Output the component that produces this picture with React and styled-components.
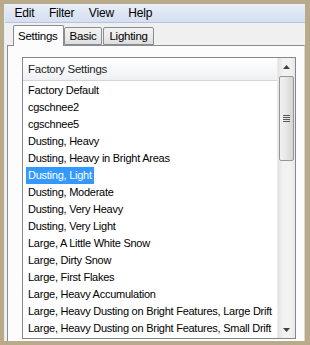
import React from "react";
import styled, { createGlobalStyle } from "styled-components";

const GlobalStyle = createGlobalStyle`
  html, body {
    margin: 0;
    padding: 0;
    background: #b9aa89;
  }
  body {
    font-family: "Liberation Sans", Arial, sans-serif;
    font-size: 11px;
  }
`;

const presets = [
  "Factory Default",
  "cgschnee2",
  "cgschnee5",
  "Dusting, Heavy",
  "Dusting, Heavy in Bright Areas",
  "Dusting, Light",
  "Dusting, Moderate",
  "Dusting, Very Heavy",
  "Dusting, Very Light",
  "Large, A Little White Snow",
  "Large, Dirty Snow",
  "Large, First Flakes",
  "Large, Heavy Accumulation",
  "Large, Heavy Dusting on Bright Features, Large Drift",
  "Large, Heavy Dusting on Bright Features, Small Drift",
];

function App() {
  const selected = "Dusting, Light";
  return (
    <>
      <GlobalStyle />
      <Frame>
        <Window>
          <MenuBar>
            <MenuItem>Edit</MenuItem>
            <MenuItem>Filter</MenuItem>
            <MenuItem>View</MenuItem>
            <MenuItem>Help</MenuItem>
          </MenuBar>
          <TabStrip>
            <Tab $active>Settings</Tab>
            <Tab>Basic</Tab>
            <Tab>Lighting</Tab>
          </TabStrip>
          <TabPage>
            <ListBox>
              <ListArea>
                <ListHeader>Factory Settings</ListHeader>
                {presets.map((p) => (
                  <Row key={p}>
                    <RowText $selected={p === selected}>{p}</RowText>
                  </Row>
                ))}
              </ListArea>
              <ScrollBar>
                <ArrowButton>
                  <svg width="7" height="4" viewBox="0 0 7 4">
                    <path d="M0 4 L3.5 0 L7 4 Z" fill="#404040" />
                  </svg>
                </ArrowButton>
                <Track>
                  <Thumb>
                    <Grip>
                      <span />
                      <span />
                      <span />
                      <span />
                    </Grip>
                  </Thumb>
                </Track>
                <ArrowButton>
                  <svg width="7" height="4" viewBox="0 0 7 4">
                    <path d="M0 0 L7 0 L3.5 4 Z" fill="#404040" />
                  </svg>
                </ArrowButton>
              </ScrollBar>
            </ListBox>
          </TabPage>
        </Window>
      </Frame>
    </>
  );
}

export default App;

const Frame = styled.div`
  width: 310px;
  height: 345px;
  box-sizing: border-box;
  padding: 4px 5px 4px 4px;
  background: #b9aa89;
  overflow: hidden;
`;

const Window = styled.div`
  height: 100%;
  display: flex;
  flex-direction: column;
  background: #f0f0f0;
  border-left: 1px solid #e8ecf2;
  box-sizing: border-box;
`;

const MenuBar = styled.div`
  height: 18px;
  display: flex;
  align-items: center;
  padding-left: 2px;
  background: linear-gradient(#eaf0f8, #dbe4f3 60%, #d6e0f1);
  border-bottom: 1px solid #b6c3dc;
  flex-shrink: 0;
`;

const MenuItem = styled.div`
  padding: 0 7px 0 7.5px;
  font-size: 12px;
  letter-spacing: -0.2px;
  color: #000;
`;

const TabStrip = styled.div`
  display: flex;
  align-items: flex-end;
  height: 22px;
  padding-left: 8px;
  flex-shrink: 0;
  position: relative;
  z-index: 1;
`;

const Tab = styled.div`
  box-sizing: border-box;
  height: ${(p) => (p.$active ? "21px" : "18px")};
  padding: ${(p) => (p.$active ? "4px 5px 0 4px" : "2px 5px 0 5px")};
  margin-right: ${(p) => (p.$active ? "0" : "1px")};
  margin-bottom: ${(p) => (p.$active ? "-1px" : "0")};
  border: 1px solid #898c95;
  border-bottom: ${(p) => (p.$active ? "none" : "1px solid #898c95")};
  border-radius: 2px 2px 0 0;
  background: ${(p) =>
    p.$active ? "#fcfcfc" : "linear-gradient(#f2f2f2, #ebebeb 50%, #dddddd)"};
  font-size: 11.5px;
  letter-spacing: -0.25px;
  color: #000;
`;

const TabPage = styled.div`
  flex: 1;
  min-height: 0;
  margin: 0 0 0 2px;
  border: 1px solid #898c95;
  border-bottom: none;
  border-right: 1px solid #d9d9d9;
  background: #fcfcfc;
  padding: 11px 8px 2px 14px;
  display: flex;
  flex-direction: column;
`;

const ListBox = styled.div`
  flex: 1;
  min-height: 0;
  display: flex;
  border: 1px solid #828790;
  background: #fff;
  overflow: hidden;
`;

const ListArea = styled.div`
  flex: 1;
  min-width: 0;
  overflow: hidden;
`;

const ListHeader = styled.div`
  height: 22px;
  line-height: 22px;
  padding-left: 5px;
  font-size: 11.5px;
  letter-spacing: -0.25px;
  color: #1e1e1e;
  background: linear-gradient(#ffffff, #f6f7f9 60%, #eef0f3);
  border-bottom: 1px solid #d5d5d5;
  margin-bottom: 1px;
`;

const Row = styled.div`
  height: 17px;
  line-height: 17px;
  padding-left: 3px;
  white-space: nowrap;
  font-size: 11px;
  letter-spacing: -0.25px;
`;

const RowText = styled.span`
  display: inline-block;
  padding: 0 2px;
  color: ${(p) => (p.$selected ? "#ffffff" : "#000000")};
  background: ${(p) => (p.$selected ? "#3399ff" : "transparent")};
`;

const ScrollBar = styled.div`
  width: 17px;
  flex-shrink: 0;
  display: flex;
  flex-direction: column;
  background: linear-gradient(90deg, #e3e3e3, #f2f2f2 30%, #f2f2f2 70%, #e8e8e8);
  border-left: 1px solid #ececec;
`;

const ArrowButton = styled.div`
  height: 17px;
  display: flex;
  align-items: center;
  justify-content: center;
  flex-shrink: 0;
`;

const Track = styled.div`
  flex: 1;
  padding-top: 1px;
`;

const Thumb = styled.div`
  height: 85px;
  margin: 0 1px;
  box-sizing: border-box;
  border: 1px solid #979797;
  border-radius: 2px;
  background: linear-gradient(90deg, #f1f1f1, #e8e8e8 45%, #d4d4d4);
  display: flex;
  align-items: center;
  justify-content: center;
`;

const Grip = styled.div`
  display: flex;
  flex-direction: column;
  gap: 1px;
  span {
    display: block;
    width: 7px;
    height: 1px;
    background: #5a5a5a;
  }
`;
